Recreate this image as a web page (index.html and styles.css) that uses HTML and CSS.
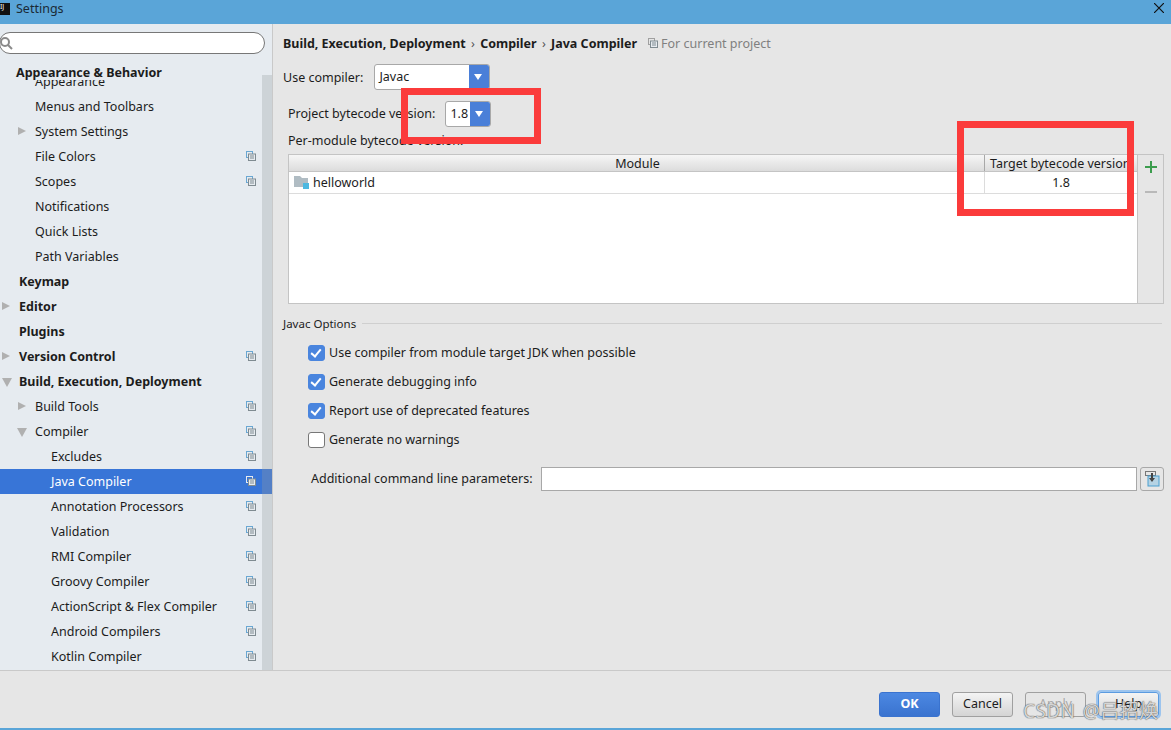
FILE: index.html
```html
<!DOCTYPE html>
<html lang="en">
<head>
  <meta charset="UTF-8" />
  <title>Settings</title>
  <link rel="stylesheet" href="styles.css">
</head>
<body>
<svg class="defs" width="0" height="0">
  <symbol id="copy" viewBox="0 0 10 10">
    <rect x="0.5" y="0.5" width="6" height="6" fill="none" stroke="currentColor"/>
    <rect x="2.5" y="3" width="7" height="6.5" fill="#e6ebf0" stroke="#7f8b91"/>
    <path d="M4 5h4M4 7h4" stroke="#7f8b91"/>
  </symbol>
</svg>

<div class="window">
  <header class="titlebar">
    <span class="app-icon"><span>IJ</span></span>
    <span class="title">Settings</span>
    <svg class="close" width="10" height="10" viewBox="0 0 10 10"><path d="M0 0l10 10M10 0L0 10" stroke="#111" stroke-width="1.2"/></svg>
  </header>

  <div class="content">
    <aside class="sidebar">
      <div class="search">
        <svg class="search-icon" width="14" height="14" viewBox="0 0 14 14"><circle cx="5" cy="6" r="4" fill="none" stroke="#8a8a8a" stroke-width="2"/><path d="M8 9l4 4" stroke="#8a8a8a" stroke-width="2"/></svg>
      </div>
      <div class="group-head">Appearance &amp; Behavior</div>
      <ul class="tree">
        <li class="row lvl1 first">Appearance</li>
        <li class="row lvl1">Menus and Toolbars</li>
        <li class="row lvl1 closed">System Settings</li>
        <li class="row lvl1 proj">File Colors<svg class="copy"><use href="#copy"/></svg></li>
        <li class="row lvl1 proj">Scopes<svg class="copy"><use href="#copy"/></svg></li>
        <li class="row lvl1">Notifications</li>
        <li class="row lvl1">Quick Lists</li>
        <li class="row lvl1">Path Variables</li>
        <li class="row lvl0 bold">Keymap</li>
        <li class="row lvl0 bold closed">Editor</li>
        <li class="row lvl0 bold">Plugins</li>
        <li class="row lvl0 bold closed">Version Control<svg class="copy"><use href="#copy"/></svg></li>
        <li class="row lvl0 bold open">Build, Execution, Deployment</li>
        <li class="row lvl1 closed">Build Tools<svg class="copy"><use href="#copy"/></svg></li>
        <li class="row lvl1 open">Compiler<svg class="copy"><use href="#copy"/></svg></li>
        <li class="row lvl2">Excludes<svg class="copy"><use href="#copy"/></svg></li>
        <li class="row lvl2 selected">Java Compiler<svg class="copy"><use href="#copy"/></svg></li>
        <li class="row lvl2">Annotation Processors<svg class="copy"><use href="#copy"/></svg></li>
        <li class="row lvl2">Validation<svg class="copy"><use href="#copy"/></svg></li>
        <li class="row lvl2">RMI Compiler<svg class="copy"><use href="#copy"/></svg></li>
        <li class="row lvl2">Groovy Compiler<svg class="copy"><use href="#copy"/></svg></li>
        <li class="row lvl2">ActionScript &amp; Flex Compiler<svg class="copy"><use href="#copy"/></svg></li>
        <li class="row lvl2">Android Compilers<svg class="copy"><use href="#copy"/></svg></li>
        <li class="row lvl2">Kotlin Compiler<svg class="copy"><use href="#copy"/></svg></li>
      </ul>
      <div class="scrollbar"></div>
    </aside>

    <main class="main">
      <div class="crumbs">
        <b>Build, Execution, Deployment</b><i>›</i><b>Compiler</b><i>›</i><b>Java Compiler</b>
        <span class="for-project"><svg class="copy-sm"><use href="#copy"/></svg>For current project</span>
      </div>

      <div class="field compiler-field">
        <span>Use compiler:</span>
        <div class="combo combo-wide"><span class="combo-val">Javac</span><span class="combo-btn"></span></div>
      </div>

      <div class="field bytecode-field">
        <span>Project bytecode version:</span>
        <div class="combo combo-small"><span class="combo-val">1.8</span><span class="combo-btn"></span></div>
      </div>

      <div class="per-module">Per-module bytecode version:</div>

      <div class="table-wrap">
        <div class="table">
          <div class="thead">
            <div class="col-module">Module</div>
            <div class="col-target">Target bytecode version</div>
          </div>
          <div class="tbody-row">
            <div class="col-module cell-name">
              <svg width="15" height="15" viewBox="0 0 15 15"><path d="M0 1h6l2 2h6v9H0z" fill="#b0bcc3"/><rect x="9" y="8" width="6" height="6" fill="#4db8e0"/></svg>
              helloworld
            </div>
            <div class="col-target cell-target">1.8</div>
          </div>
        </div>
        <div class="table-tools">
          <svg width="14" height="14" viewBox="0 0 14 14"><path d="M7 1v12M1 7h12" stroke="#3c9d4e" stroke-width="2"/></svg>
          <svg width="14" height="14" viewBox="0 0 14 14"><path d="M1 7h12" stroke="#b9b9b9" stroke-width="2"/></svg>
        </div>
      </div>

      <div class="section-head"><span>Javac Options</span><hr></div>

      <div class="checks">
        <label class="check on">Use compiler from module target JDK when possible</label>
        <label class="check on">Generate debugging info</label>
        <label class="check on">Report use of deprecated features</label>
        <label class="check">Generate no warnings</label>
      </div>

      <div class="params">
        <span>Additional command line parameters:</span>
        <div class="text-input"></div>
        <div class="expand-btn">
          <svg width="16" height="16" viewBox="0 0 16 16"><rect x="1.5" y="0.5" width="10" height="4" fill="none" stroke="#777"/><rect x="4" y="5" width="11" height="10" fill="#b5d3e4" stroke="#4a9fd0"/><path d="M8 2v6" stroke="#444" stroke-width="2"/><path d="M5 7h6l-3 4z" fill="#444"/></svg>
        </div>
      </div>
    </main>
  </div>

  <footer class="footer">
    <button class="btn btn-ok">OK</button>
    <button class="btn">Cancel</button>
    <button class="btn btn-off">Apply</button>
    <button class="btn btn-focus">Help</button>
  </footer>
</div>

<!-- annotations pasted over the screenshot -->
<div class="mark mark-1"></div>
<div class="mark mark-2"></div>
<div class="watermark">CSDN @吕招焕</div>
</body>
</html>
```

FILE: styles.css
```css
* {
  box-sizing: border-box;
}
html, body {
  margin: 0;
  height: 100%;
  overflow: hidden;
}
body {
  position: relative;
  font-family: "Noto Sans", "Noto Sans CJK SC", sans-serif;
  font-size: 12.5px;
  color: #1c1c1c;
  background: #e6e6e6;
}
.defs {
  position: absolute;
}
.window {
  display: flex;
  flex-direction: column;
  height: 730px;
  border-bottom: 2px solid #5aa5d8;
}

/* title bar */
.titlebar {
  flex: 0 0 24px;
  display: flex;
  align-items: center;
  background: #5aa5d8;
  color: #1a2a35;
  font-size: 12.5px;
}
.app-icon {
  width: 10px;
  height: 12px;
  background: #111;
  color: #fff;
  font-size: 7px;
  line-height: 8px;
  overflow: hidden;
  margin-right: 6px;
  margin-top: -6px;
}
.title {
  margin-top: -8px;
}
.close {
  margin-left: auto;
  margin-right: 7px;
  margin-top: -8px;
}

.content {
  flex: 1;
  display: flex;
  min-height: 0;
}

/* left tree */
.sidebar {
  position: relative;
  flex: 0 0 273px;
  display: flex;
  flex-direction: column;
  background: #e6ebf0;
  border-right: 1px solid #c9c9c9;
  overflow: hidden;
}
.search {
  width: 266px;
  height: 22px;
  margin: 8px 0 0 -1px;
  background: #fff;
  border: 1px solid #777;
  border-radius: 11px;
  display: flex;
  align-items: center;
}
.group-head {
  flex: 0 0 26px;
  padding: 12px 0 0 16px;
  font-weight: 700;
  line-height: 14px;
  white-space: nowrap;
}
.tree {
  list-style: none;
  margin: 0;
  padding: 0;
  flex: 1;
  min-height: 0;
  overflow: hidden;
}
.row {
  position: relative;
  height: 25px;
  line-height: 25px;
  white-space: nowrap;
}
.row.first {
  margin-top: -11px;
}
.lvl0 { padding-left: 19px; }
.lvl1 { padding-left: 35px; }
.lvl2 { padding-left: 51px; }
.bold { font-weight: 700; }
.selected {
  background: #3875d7;
  color: #fff;
}
.closed::before, .open::before {
  content: "";
  position: absolute;
  top: 8px;
}
.closed::before {
  border-left: 8px solid #b0b0b0;
  border-top: 4.5px solid transparent;
  border-bottom: 4.5px solid transparent;
}
.open::before {
  top: 9px;
  border-top: 9px solid #b0b0b0;
  border-left: 5px solid transparent;
  border-right: 5px solid transparent;
}
.lvl0::before { left: 2px; }
.lvl1::before { left: 18px; }
.lvl1.open::before { left: 17px; }
.copy {
  position: absolute;
  left: 246px;
  top: 7px;
  width: 10px;
  height: 10px;
  color: #6aa7d2;
}
.selected .copy {
  color: #e6ebf0;
}
.scrollbar {
  position: absolute;
  left: 262px;
  top: 51px;
  bottom: 0;
  width: 10px;
  background: rgba(150, 155, 160, 0.3);
}

/* right pane */
.main {
  flex: 1;
  min-width: 0;
  padding: 9px 9px 0 10px;
  background: #e6e6e6;
}
.crumbs {
  display: flex;
  align-items: center;
  height: 20px;
  white-space: nowrap;
}
.crumbs i {
  font-style: normal;
  color: #555;
  margin: 0 5.3px;
}
.for-project {
  display: flex;
  align-items: center;
  margin-left: 11px;
  color: #808080;
}
.copy-sm {
  width: 10px;
  height: 10px;
  margin-right: 3px;
  color: #a0a0a0;
}
.field {
  display: flex;
  align-items: center;
  white-space: nowrap;
}
.compiler-field {
  margin-top: 11px;
  gap: 11px;
}
.bytecode-field {
  margin-top: 11px;
  margin-left: 5px;
  gap: 10px;
}
.bytecode-field > span {
  margin-top: -2px;
}
.combo {
  display: flex;
  height: 26px;
  background: #fff;
  border: 1px solid #a8a8a8;
  border-radius: 3px;
  overflow: hidden;
}
.combo-wide { width: 116px; }
.combo-small { width: 46px; }
.combo-val {
  flex: 1;
  padding-left: 4px;
  line-height: 24px;
}
.combo-btn {
  position: relative;
  width: 20px;
  background: #4a7fd8;
}
.combo-btn::after {
  content: "";
  position: absolute;
  left: 5px;
  top: 9px;
  border-top: 6px solid #fff;
  border-left: 4.5px solid transparent;
  border-right: 4.5px solid transparent;
}
.per-module {
  margin: 5px 0 0 5px;
  height: 22px;
  line-height: 18px;
}
.table-wrap {
  display: flex;
  height: 150px;
  margin-left: 5px;
}
.table {
  flex: 0 0 850px;
  background: #fff;
  border: 1px solid #c4c4c4;
}
.thead {
  display: flex;
  height: 17px;
  line-height: 17px;
  text-align: center;
  background: linear-gradient(#f6f6f6, #dcdcdc);
  border-bottom: 1px solid #c4c4c4;
  white-space: nowrap;
}
.col-module { flex: 0 0 695px; }
.thead .col-module { padding-left: 2px; }
.col-target {
  flex: 1;
  min-width: 0;
  overflow: hidden;
}
.thead .col-target {
  border-left: 1px solid #a8a8a8;
  padding-left: 5px;
  text-align: left;
}
.tbody-row {
  display: flex;
  height: 22px;
  line-height: 21px;
  border-bottom: 1px solid #dcdcdc;
}
.cell-name {
  display: flex;
  align-items: center;
  gap: 4px;
  padding-left: 5px;
}
.cell-target {
  text-align: center;
  border-left: 1px solid #dcdcdc;
}
.table-tools {
  flex: 0 0 26px;
  display: flex;
  flex-direction: column;
  align-items: center;
  gap: 11px;
  padding-top: 5px;
  border: 1px solid #c4c4c4;
  border-left: 0;
}
.section-head {
  display: flex;
  align-items: center;
  gap: 6px;
  margin-top: 10px;
  height: 18px;
  font-size: 11.5px;
}
.section-head hr {
  flex: 1;
  margin: 0;
  border: 0;
  border-top: 1px solid #cfcfcf;
}
.checks {
  display: flex;
  flex-direction: column;
  gap: 9px;
  margin: 11px 0 0 26px;
}
.check {
  position: relative;
  height: 20px;
  line-height: 20px;
  padding-left: 20px;
}
.check::before {
  content: "";
  position: absolute;
  left: -1px;
  top: 2px;
  width: 15px;
  height: 14px;
  background: #fff;
  border: 1px solid #777;
  border-radius: 3px;
}
.check.on::before {
  background: #4a85de;
  border-color: #4a85de;
}
.check.on::after {
  content: "";
  position: absolute;
  left: 4px;
  top: 4px;
  width: 4px;
  height: 8px;
  border: solid #fff;
  border-width: 0 2px 2px 0;
  transform: rotate(40deg);
}
.params {
  display: flex;
  align-items: center;
  margin: 17px 0 0 28px;
}
.params span {
  flex: 0 0 230px;
  margin-top: -2px;
}
.text-input {
  flex: 0 0 596px;
  height: 24px;
  background: #fff;
  border: 1px solid #a8a8a8;
}
.expand-btn {
  flex: 0 0 24px;
  height: 24px;
  margin-left: 3px;
  display: flex;
  align-items: center;
  justify-content: center;
  border: 1px solid #a8a8a8;
  border-radius: 3px;
}

/* dialog buttons */
.footer {
  flex: 0 0 58px;
  display: flex;
  justify-content: flex-end;
  gap: 12px;
  padding: 21px 12px 0 0;
  border-top: 1px solid #c9c9c9;
}
.btn {
  width: 61px;
  height: 25px;
  padding: 0 0 2px;
  font: inherit;
  color: #1c1c1c;
  background: linear-gradient(#f4f4f4, #d4d4d4);
  border: 1px solid #a0a0a0;
  border-radius: 3px;
}
.btn-ok {
  font-weight: 700;
  color: #fff;
  background: linear-gradient(#4c88e2, #3a73cf);
  border-color: #3a73cf;
}
.btn-off {
  background: transparent;
  color: #a8a8a8;
}
.btn-focus {
  border-color: #5b9be0;
  box-shadow: 0 0 0 2px #9cc4ee;
}

/* red boxes and site watermark */
.mark {
  position: absolute;
  border: 7px solid #fb3b3b;
}
.mark-1 {
  left: 401px;
  top: 88px;
  width: 140px;
  height: 56px;
}
.mark-2 {
  left: 957px;
  top: 121px;
  width: 177px;
  height: 95px;
}
.watermark {
  position: absolute;
  left: 1023px;
  top: 699px;
  font-size: 19px;
  line-height: 24px;
  letter-spacing: 0.4px;
  word-spacing: 2px;
  color: rgba(255, 255, 255, 0.75);
  text-shadow: 0 0 1px #555, 0 0 1px #555;
  white-space: nowrap;
}
```
